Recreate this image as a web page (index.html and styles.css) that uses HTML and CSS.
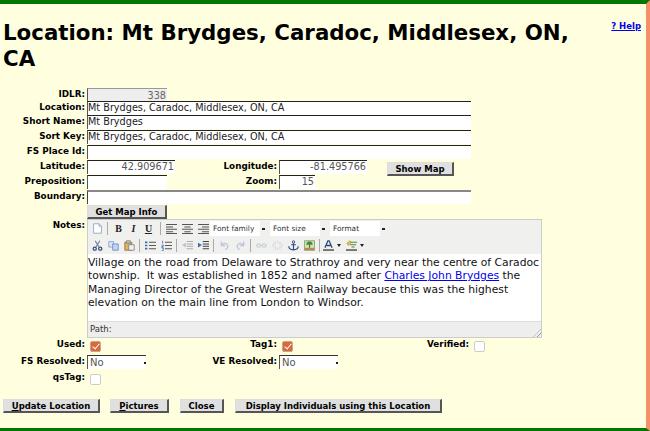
FILE: index.html
```html
<!DOCTYPE html>
<html lang="en">
<head>
    <meta charset="UTF-8">
    <title>Location: Mt Brydges, Caradoc, Middlesex, ON, CA</title>
    <link rel="stylesheet" href="styles.css">
</head>
<body>
    <svg class="sprite" width="0" height="0">
        <symbol id="i-new" viewBox="0 0 14 14"><path d="M2 1h7l3 3v9H2z" fill="#fff" stroke="#8a9ab5"/><path d="M9 1v3h3" fill="#dfe6f2" stroke="#8a9ab5"/></symbol>
        <symbol id="i-left" viewBox="0 0 14 14"><path d="M0 2h14M0 5h9M0 8h14M0 11h9M0 13.500h14" stroke="#555" fill="none" stroke-width="1.300"/></symbol>
        <symbol id="i-center" viewBox="0 0 14 14"><path d="M0 2h14M3 5h8M0 8h14M3 11h8M0 13.500h14" stroke="#555" fill="none" stroke-width="1.300"/></symbol>
        <symbol id="i-right" viewBox="0 0 14 14"><path d="M0 2h14M5 5h9M0 8h14M5 11h9M0 13.500h14" stroke="#555" fill="none" stroke-width="1.300"/></symbol>
        <symbol id="i-cut" viewBox="0 0 14 14"><path d="M4 1l5 8M10 1L5 9" stroke="#6b7f9e" stroke-width="1.400" fill="none"/><circle cx="3.500" cy="11" r="2" fill="none" stroke="#35507f" stroke-width="1.600"/><circle cx="10.500" cy="11" r="2" fill="none" stroke="#35507f" stroke-width="1.600"/></symbol>
        <symbol id="i-copy" viewBox="0 0 14 14"><path d="M1 2h6v7H1z" fill="#dbe6f7" stroke="#7f9bc9"/><path d="M6 5h7v8H6z" fill="#c3d5f2" stroke="#5f82bd"/></symbol>
        <symbol id="i-paste" viewBox="0 0 14 14"><path d="M1 3h9v10H1z" fill="#d9b36a" stroke="#8a6d35"/><path d="M3 1h5v3H3z" fill="#ccc" stroke="#777"/><path d="M6 6h7v7H6z" fill="#f2f2f2" stroke="#7a7a7a"/></symbol>
        <symbol id="i-ul" viewBox="0 0 14 14"><path d="M5 3h9M5 7h9M5 11h9" stroke="#555" fill="none" stroke-width="1.300"/><path d="M0 2h3v2H0zM0 6h3v2H0zM0 10h3v2H0z" fill="#3c6cb0"/></symbol>
        <symbol id="i-ol" viewBox="0 0 14 14"><path d="M5 3h9M5 7h9M5 11h9" stroke="#555" fill="none" stroke-width="1.300"/><path d="M2 1v3.500M1 6.500h2v1.500H1v1.500h2M1 10.500h2v3H1" stroke="#3c6cb0" fill="none"/></symbol>
        <symbol id="i-outdent" viewBox="0 0 14 14"><path d="M6 2h8M6 5h8M6 8h8M6 11h8" stroke="#aaa" fill="none" stroke-width="1.300"/><path d="M5 3.500v6L0 6.500z" fill="#b6c3d6"/></symbol>
        <symbol id="i-indent" viewBox="0 0 14 14"><path d="M6 2h8M6 5h8M6 8h8M6 11h8" stroke="#444" fill="none" stroke-width="1.300"/><path d="M0 3.500v6l5-3z" fill="#3c6cb0"/></symbol>
        <symbol id="i-undo" viewBox="0 0 14 14"><path d="M3 2v5h5M3 7c2-3 7-4 8 0s-1 4-3 5" stroke="#b9c6dc" stroke-width="1.600" fill="none"/></symbol>
        <symbol id="i-redo" viewBox="0 0 14 14"><path d="M11 2v5H6M11 7C9 4 4 3 3 7s1 4 3 5" stroke="#b9c6dc" stroke-width="1.600" fill="none"/></symbol>
        <symbol id="i-link" viewBox="0 0 14 14"><path d="M6 5H3a2 2 0 000 4h3M8 5h3a2 2 0 010 4H8M5 7h4" stroke="#bcc7d8" stroke-width="1.300" fill="none"/></symbol>
        <symbol id="i-unlink" viewBox="0 0 14 14"><path d="M5 5H3a2 2 0 000 4h2M9 5h2a2 2 0 010 4H9M7 1v3M7 10v3M3 2l2 2M11 2L9 4M3 12l2-2M11 12L9 10" stroke="#ccd3de" stroke-width="1.200" fill="none"/></symbol>
        <symbol id="i-anchor" viewBox="0 0 14 14"><circle cx="7" cy="2.500" r="1.500" fill="none" stroke="#2f4f7f" stroke-width="1.200"/><path d="M7 4v9M4 6h6M1 8c0 3 3 4.500 6 4.500S13 11 13 8" stroke="#2f4f7f" stroke-width="1.500" fill="none"/></symbol>
        <symbol id="i-image" viewBox="0 0 14 14"><path d="M.5 1h13v12H.5z" fill="#cfe3b8" stroke="#7a8f6a"/><path d="M7 2c3 0 4 2 4 4H3c0-2 1-4 4-4z" fill="#3f8a35"/><path d="M6.300 6h1.400v4H6.300z" fill="#7a5a30"/><path d="M1 10h12v3H1z" fill="#b98a4a"/></symbol>
        <symbol id="i-color" viewBox="0 0 14 14"><path d="M2.500 10L6.200 1h1.600l3.700 9M4.500 7h5" stroke="#27467d" stroke-width="1.600" fill="none"/><path d="M0 11.500h14V14H0z" fill="#777"/></symbol>
        <symbol id="i-hilite" viewBox="0 0 14 14"><path d="M1 4l4-3 2 2-4 4z" fill="#e6c83a" stroke="#8a7a20" stroke-width=".6"/><path d="M6 3h8M5 6h8M7 9h4" stroke="#4a8a35" fill="none" stroke-width="1.300"/><path d="M0 11.500h14V14H0z" fill="#777"/></symbol>
    </svg>

    <div class="page">
        <a class="help" href="#help">? Help</a>
        <h1>Location: Mt Brydges, Caradoc, Middlesex, ON, CA</h1>

        <form class="form">
            <div class="row row-idlr">
                <label class="lbl">IDLR:</label>
                <input class="txt txt-short txt-ro" value="338">
            </div>
            <div class="row row-location">
                <label class="lbl">Location:</label>
                <input class="txt txt-wide" value="Mt Brydges, Caradoc, Middlesex, ON, CA">
            </div>
            <div class="row row-short">
                <label class="lbl">Short Name:</label>
                <input class="txt txt-wide" value="Mt Brydges">
            </div>
            <div class="row row-sort">
                <label class="lbl">Sort Key:</label>
                <input class="txt txt-wide" value="Mt Brydges, Caradoc, Middlesex, ON, CA">
            </div>
            <div class="row row-fs">
                <label class="lbl">FS Place Id:</label>
                <input class="txt txt-wide">
            </div>
            <div class="row row-lat">
                <label class="lbl">Latitude:</label>
                <input class="txt txt-coord" value="42.909671">
                <label class="lbl lbl-mid">Longitude:</label>
                <input class="txt txt-coord" value="-81.495766">
                <button type="button" class="btn btn-map">Show Map</button>
            </div>
            <div class="row row-prep">
                <label class="lbl">Preposition:</label>
                <input class="txt txt-short txt-left">
                <label class="lbl lbl-zoom">Zoom:</label>
                <input class="txt txt-zoom" value="15">
            </div>
            <div class="row row-boundary">
                <label class="lbl">Boundary:</label>
                <input class="txt txt-wide txt-grey">
            </div>
            <div class="row row-getmap">
                <span class="lbl"></span>
                <button type="button" class="btn btn-getmap">Get Map Info</button>
            </div>

            <div class="row row-notes">
                <label class="lbl">Notes:</label>
                <div class="editor">
                    <div class="toolbar">
                        <div class="tools">
                            <svg class="ico"><use href="#i-new"/></svg>
                            <span class="sep"></span>
                            <span class="glyph glyph-b">B</span>
                            <span class="glyph glyph-i">I</span>
                            <span class="glyph glyph-u">U</span>
                            <span class="sep"></span>
                            <svg class="ico"><use href="#i-left"/></svg>
                            <svg class="ico"><use href="#i-center"/></svg>
                            <svg class="ico"><use href="#i-right"/></svg>
                            <span class="combo combo-family">Font family</span>
                            <span class="combo">Font size</span>
                            <span class="combo">Format</span>
                        </div>
                        <div class="tools">
                            <svg class="ico"><use href="#i-cut"/></svg>
                            <svg class="ico"><use href="#i-copy"/></svg>
                            <svg class="ico"><use href="#i-paste"/></svg>
                            <span class="sep"></span>
                            <svg class="ico"><use href="#i-ul"/></svg>
                            <svg class="ico"><use href="#i-ol"/></svg>
                            <span class="sep"></span>
                            <svg class="ico"><use href="#i-outdent"/></svg>
                            <svg class="ico"><use href="#i-indent"/></svg>
                            <span class="sep"></span>
                            <svg class="ico"><use href="#i-undo"/></svg>
                            <svg class="ico"><use href="#i-redo"/></svg>
                            <span class="sep"></span>
                            <svg class="ico"><use href="#i-link"/></svg>
                            <svg class="ico"><use href="#i-unlink"/></svg>
                            <svg class="ico"><use href="#i-anchor"/></svg>
                            <svg class="ico"><use href="#i-image"/></svg>
                            <span class="sep sep-color"></span>
                            <svg class="ico ico-color"><use href="#i-color"/></svg>
                            <span class="caret"></span>
                            <svg class="ico ico-color"><use href="#i-hilite"/></svg>
                            <span class="caret"></span>
                        </div>
                    </div>
                    <div class="content">Village on the road from Delaware to Strathroy and very near the centre of Caradoc<br>township.&nbsp; It was established in 1852 and named after <a href="#brydges">Charles John Brydges</a> the<br>Managing Director of the Great Western Railway because this was the highest<br>elevation on the main line from London to Windsor.</div>
                    <div class="status">Path:<span class="grip"></span></div>
                </div>
            </div>

            <div class="row row-used">
                <label class="lbl">Used:</label>
                <input type="checkbox" class="chk" checked>
                <label class="lbl lbl-tag">Tag1:</label>
                <input type="checkbox" class="chk" checked>
                <label class="lbl lbl-verified">Verified:</label>
                <input type="checkbox" class="chk">
            </div>
            <div class="row row-resolved">
                <label class="lbl">FS Resolved:</label>
                <select class="sel"><option>No</option></select>
                <label class="lbl lbl-ve">VE Resolved:</label>
                <select class="sel"><option>No</option></select>
            </div>
            <div class="row row-qstag">
                <label class="lbl">qsTag:</label>
                <input type="checkbox" class="chk">
            </div>

            <div class="actions">
                <button type="button" class="btn btn-update"><u>U</u>pdate Location</button>
                <button type="button" class="btn btn-pictures"><u>P</u>ictures</button>
                <button type="button" class="btn btn-close">Close</button>
                <button type="button" class="btn btn-display">Display Individuals using this Location</button>
            </div>
        </form>
    </div>
</body>
</html>
```

FILE: styles.css
```css
html, body {
    margin: 0;
    padding: 0;
    height: 100%;
    overflow: hidden;
}

body {
    background-color: #ffffe0;
    font-family: "DejaVu Sans", sans-serif;
    color: #000;
}

.sprite {
    position: absolute;
}

.page {
    box-sizing: border-box;
    width: 650px;
    height: 431px;
    padding: 0 0 0 3px;
    border-top: 4px solid #007800;
    border-right: 4px solid #f49068;
    border-bottom: 3px solid #007800;
    overflow: hidden;
}

.help {
    float: right;
    margin: 17px 5px 0 8px;
    font-size: 8.5px;
    font-weight: bold;
    color: #0000ee;
}

h1 {
    margin: 0;
    padding-top: 16px;
    height: 68px;
    font-size: 21.33px;
    line-height: 26px;
    font-weight: bold;
    box-sizing: border-box;
}

.form {
    margin-top: 16px;
}

.row {
    display: flex;
    align-items: flex-start;
}

.row-idlr { height: 13px; }
.row-location { height: 14px; }
.row-short { height: 15px; }
.row-sort { height: 15px; }
.row-fs { height: 15px; }
.row-lat { height: 15px; }
.row-prep { height: 15px; }
.row-boundary { height: 15px; }
.row-getmap { height: 14px; }
.row-notes { height: 119px; }
.row-used { height: 17px; }
.row-resolved { height: 16px; }
.row-qstag { height: 28px; }

.lbl {
    flex: none;
    width: 82px;
    padding-right: 2px;
    text-align: right;
    font-size: 8.8px;
    font-weight: bold;
    line-height: 12px;
}

.lbl-mid { width: 102px; }
.lbl-zoom { width: 110px; }
.lbl-tag { width: 176px; }
.lbl-verified { width: 176px; }
.lbl-ve { width: 131px; }

.txt {
    box-sizing: border-box;
    flex: none;
    height: 14px;
    margin: 0;
    padding: 0 1px 2px 0;
    border: none;
    border-top: 1px solid #222;
    border-left: 1px solid #555;
    background: #fff;
    font-family: "DejaVu Sans", sans-serif;
    font-size: 9.7px;
    color: #222;
    outline: none;
}

.txt-wide { width: 384px; }
.txt-short { width: 80px; text-align: right; }
.txt-left { text-align: left; }
.txt-coord { width: 88px; text-align: right; color: #555; }
.txt-zoom { width: 36px; text-align: right; color: #555; }

.txt-ro {
    height: 13px;
    padding-bottom: 0;
    background: #eee;
    color: #666;
    border-top-color: #999;
}

.txt-grey {
    border-top: 2px solid #888;
    border-left: 1px solid #444;
}

.btn {
    box-sizing: border-box;
    height: 14px;
    margin: 0;
    padding: 0;
    border: 1px solid #ddd;
    border-right: 2px solid #555;
    border-bottom: 2px solid #555;
    background: #e0e0e0;
    font-family: "DejaVu Sans", sans-serif;
    font-size: 8.5px;
    font-weight: bold;
    line-height: 10px;
    white-space: nowrap;
    color: #000;
}

.btn-map { width: 67px; margin-left: 20px; margin-top: 2px; }
.btn-getmap { width: 80px; }

.editor {
    box-sizing: border-box;
    width: 455px;
    height: 119px;
    display: flex;
    flex-direction: column;
    border: 1px solid #ccc;
    background: #fff;
}

.toolbar {
    background: #f0f0ee;
    height: 34px;
    flex: none;
    padding-left: 4px;
}

.tools {
    display: flex;
    align-items: center;
    height: 17px;
}

.ico {
    flex: none;
    width: 11px;
    height: 11px;
    margin-right: 5px;
}

.ico-color {
    margin-right: 2px;
}

.sep {
    flex: none;
    width: 1px;
    height: 13px;
    margin: 0 5px 0 -1px;
    background: #aaa;
}

.sep-color {
    margin-right: 3px;
}

.glyph {
    flex: none;
    width: 15px;
    text-align: center;
    font-family: "Liberation Serif", serif;
    font-size: 10px;
    font-weight: bold;
    color: #222;
}

.glyph-b { margin-left: -2px; }
.glyph-i { font-style: italic; }
.glyph-u { text-decoration: underline; margin-right: 5px; }

.combo {
    box-sizing: border-box;
    flex: none;
    width: 57px;
    height: 15px;
    margin-right: 3px;
    padding-left: 3px;
    background:
        linear-gradient(#222, #222) no-repeat right 2px center / 3px 2px,
        linear-gradient(#fff, #fff) no-repeat left top / 50px 100%;
    font-size: 7.4px;
    line-height: 15px;
    color: #333;
}

.combo-family { margin-left: -4px; }

.caret {
    flex: none;
    width: 0;
    height: 0;
    margin: 0 5px 0 1px;
    border-left: 2px solid transparent;
    border-right: 2px solid transparent;
    border-top: 3px solid #222;
}

.content {
    flex: 1;
    padding-top: 2px;
    font-size: 10.75px;
    line-height: 13.4px;
    white-space: nowrap;
    color: #111;
}

.content a {
    color: #0000ee;
}

.status {
    position: relative;
    flex: none;
    height: 15px;
    padding-left: 2px;
    border-top: 1px solid #ddd;
    background: #eee;
    font-size: 8.5px;
    line-height: 14px;
    color: #333;
}

.grip {
    position: absolute;
    right: 0;
    bottom: 0;
    width: 8px;
    height: 8px;
    background: repeating-linear-gradient(135deg, transparent 0 2px, #999 2px 3px);
    clip-path: polygon(100% 0, 100% 100%, 0 100%);
}

.chk {
    appearance: none;
    box-sizing: border-box;
    position: relative;
    flex: none;
    width: 11px;
    height: 11px;
    margin: 3px 0 0 3px;
    border: 1px solid #ccc;
    border-radius: 2px;
    background: #fff;
}

.chk:checked {
    background: #d7693c;
    border-color: #c9a58e;
}

.chk:checked::after {
    content: "";
    position: absolute;
    left: 3px;
    top: 0;
    width: 3px;
    height: 6px;
    border-right: 1.5px solid #fff;
    border-bottom: 1.5px solid #fff;
    transform: rotate(40deg);
}

.sel {
    appearance: none;
    box-sizing: border-box;
    flex: none;
    width: 59px;
    height: 14px;
    margin: 0;
    padding: 0 0 0 2px;
    border: none;
    border-top: 1px solid #333;
    border-left: 1px solid #555;
    border-radius: 0;
    background: #fff linear-gradient(#222, #222) no-repeat right 0 center / 2px 2px;
    font-family: "DejaVu Sans", sans-serif;
    font-size: 10px;
    color: #555;
}

.actions {
    display: flex;
}

.btn-update { width: 97px; }
.btn-pictures { width: 59px; margin-left: 10px; }
.btn-close { width: 44px; margin-left: 11px; }
.btn-display { width: 207px; margin-left: 11px; }
```
